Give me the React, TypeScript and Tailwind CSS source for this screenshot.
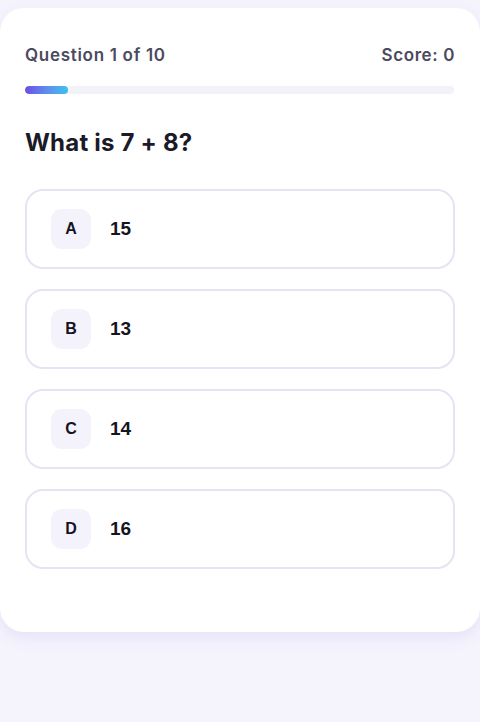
import React from "react";

const options = [
  { key: "A", text: "15" },
  { key: "B", text: "13" },
  { key: "C", text: "14" },
  { key: "D", text: "16" },
];

export default function App() {
  return (
    <div className="min-h-[722px] w-full bg-[#f5f4fd] pt-[8px]" style={{ fontFamily: "Inter, 'Liberation Sans', sans-serif" }}>
      <div className="w-full rounded-[24px] bg-white px-[25px] pt-[35px] pb-[63px] shadow-[0_6px_16px_rgba(120,110,200,0.12)]">
        <div className="flex items-center justify-between h-[26px]">
          <span className="text-[17px] font-semibold text-[#4b4a5e] tracking-[0.7px]">Question 1 of 10</span>
          <span className="text-[17px] font-semibold text-[#4b4a5e] tracking-[0.6px]">Score: 0</span>
        </div>
        <div className="mt-[17px] h-[8px] w-[429px] rounded-full bg-[#f3f2f9] overflow-hidden">
          <div className="h-full rounded-full bg-gradient-to-r from-[#6a4ee3] to-[#36c2f2]" style={{ width: "10%" }} />
        </div>
        <h1 className="mt-[33px] h-[32px] leading-[32px] text-[24px] font-bold text-[#1b1a28] tracking-[0.2px]">What is 7 + 8?</h1>
        <div className="mt-[30px] flex flex-col gap-[20px] w-[430px]">
          {options.map((o) => (
            <div key={o.key} className="flex h-[80px] items-center rounded-[18px] border-2 border-[#e6e4f4] bg-white pl-[24px]">
              <div className="flex h-[40px] w-[40px] items-center justify-center rounded-[11px] bg-[#f4f3fb] text-[16px] font-bold text-[#15141f]" style={{ fontFamily: "'Liberation Sans', Arial, sans-serif" }}>
                {o.key}
              </div>
              <span className="ml-[19px] text-[19px] font-semibold text-[#15141f]" style={{ fontFamily: "'Liberation Sans', Arial, sans-serif" }}>{o.text}</span>
            </div>
          ))}
        </div>
      </div>
    </div>
  );
}
